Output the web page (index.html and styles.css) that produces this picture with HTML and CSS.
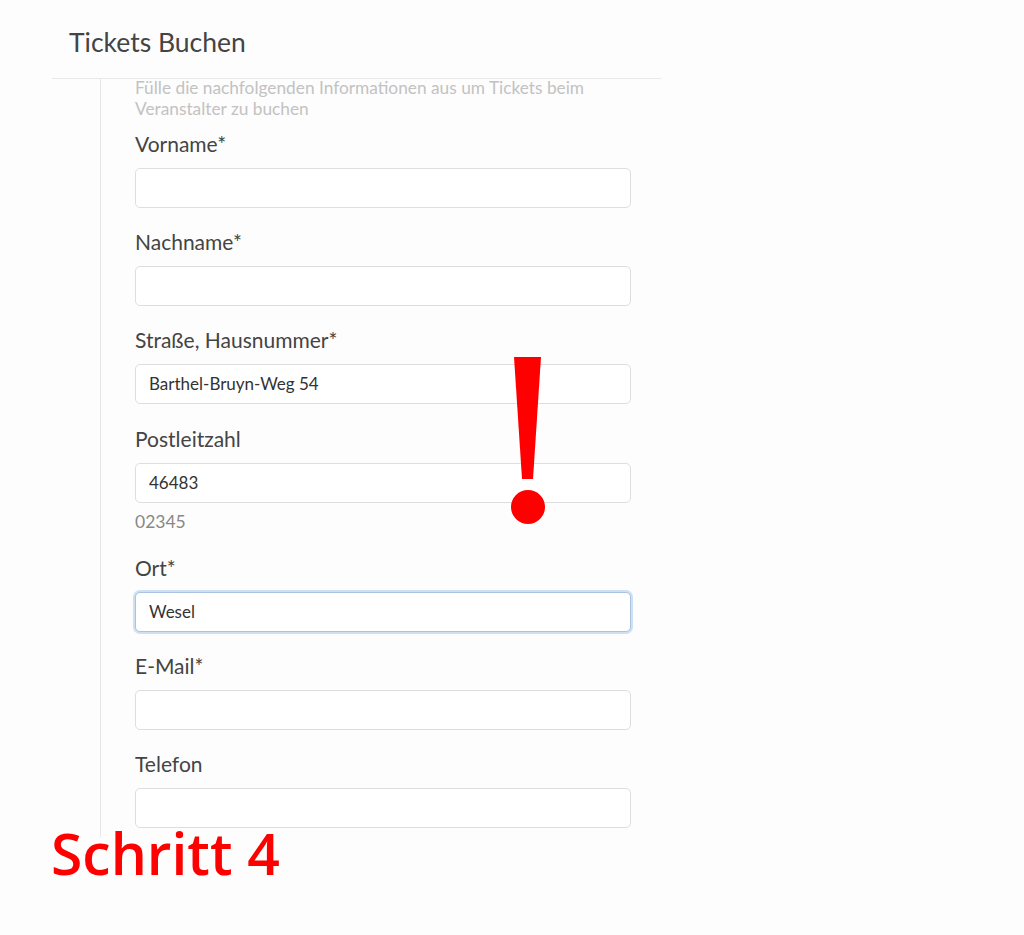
FILE: index.html
```html
<!DOCTYPE html>
<html lang="de">
<head>
<meta charset="utf-8">
<title>Tickets Buchen</title>
<link rel="stylesheet" href="styles.css">
</head>
<body>
<div class="page">
  <div class="header">
    <h1 class="title">Tickets Buchen</h1>
  </div>
  <div class="body">
    <form class="form">
      <p class="intro">Fülle die nachfolgenden Informationen aus um Tickets beim Veranstalter zu buchen</p>
      <div class="field">
        <label class="label">Vorname*</label>
        <div class="input"></div>
      </div>
      <div class="field">
        <label class="label">Nachname*</label>
        <div class="input"></div>
      </div>
      <div class="field">
        <label class="label">Straße, Hausnummer*</label>
        <div class="input">Barthel-Bruyn-Weg 54</div>
      </div>
      <div class="field">
        <label class="label">Postleitzahl</label>
        <div class="input">46483</div>
        <div class="help">02345</div>
      </div>
      <div class="field">
        <label class="label">Ort*</label>
        <div class="input focus">Wesel</div>
      </div>
      <div class="field">
        <label class="label">E-Mail*</label>
        <div class="input"></div>
      </div>
      <div class="field last">
        <label class="label">Telefon</label>
        <div class="input"></div>
      </div>
    </form>
  </div>
  <svg class="bang" width="40" height="172" viewBox="0 0 40 172">
    <polygon points="3,0 30,0 22,122 11,122" fill="#ff0000"/>
    <circle cx="17" cy="150" r="17" fill="#ff0000"/>
  </svg>
  <div class="step">Schritt 4</div>
</div>
</body>
</html>
```

FILE: styles.css
```css
html, body {
  margin: 0;
  padding: 0;
  background: #fdfdfd;
}
body {
  font-family: Lato, "Open Sans", sans-serif;
  color: #444;
}
.page {
  position: relative;
  width: 1024px;
  min-height: 935px;
}
.header {
  margin-left: 52px;
  width: 609px;
  height: 79px;
  border-bottom: 1px solid #e9e9e9;
  padding: 27px 0 0 17px;
  box-sizing: border-box;
}
.title {
  margin: 0;
  font-size: 26.5px;
  font-weight: 400;
  color: #444;
  line-height: 30px;
}
.body {
  margin-left: 100px;
  width: 531px;
  border-left: 1px solid #e6e6e6;
  padding-left: 34px;
  box-sizing: border-box;
}
.form {
  display: flex;
  flex-direction: column;
  padding-bottom: 9px;
}
.intro {
  margin: -2px 0 13px;
  font-size: 17.3px;
  line-height: 21px;
  color: #c2c2c2;
}
.field {
  display: flex;
  flex-direction: column;
  margin-bottom: 22.2px;
}
.field.last {
  margin-bottom: 0;
}
.label {
  font-size: 21px;
  line-height: 24px;
  color: #444;
  margin-bottom: 12px;
}
.input {
  height: 40px;
  box-sizing: border-box;
  border: 1px solid #dedede;
  border-radius: 5px;
  background: #fff;
  padding: 0 13px;
  font-size: 17px;
  line-height: 38px;
  color: #333;
}
.input.focus {
  border-color: #a8c4e2;
  box-shadow: 0 0 0 2px #cfe0f1;
}
.help {
  margin-top: 7px;
  font-size: 17.5px;
  line-height: 24px;
  color: #888;
}
.bang {
  position: absolute;
  left: 511px;
  top: 357px;
}
.step {
  position: absolute;
  left: 51px;
  top: 825px;
  font-family: "Open Sans", sans-serif;
  font-weight: 600;
  font-size: 57px;
  line-height: 57px;
  color: #ff0000;
}
```
